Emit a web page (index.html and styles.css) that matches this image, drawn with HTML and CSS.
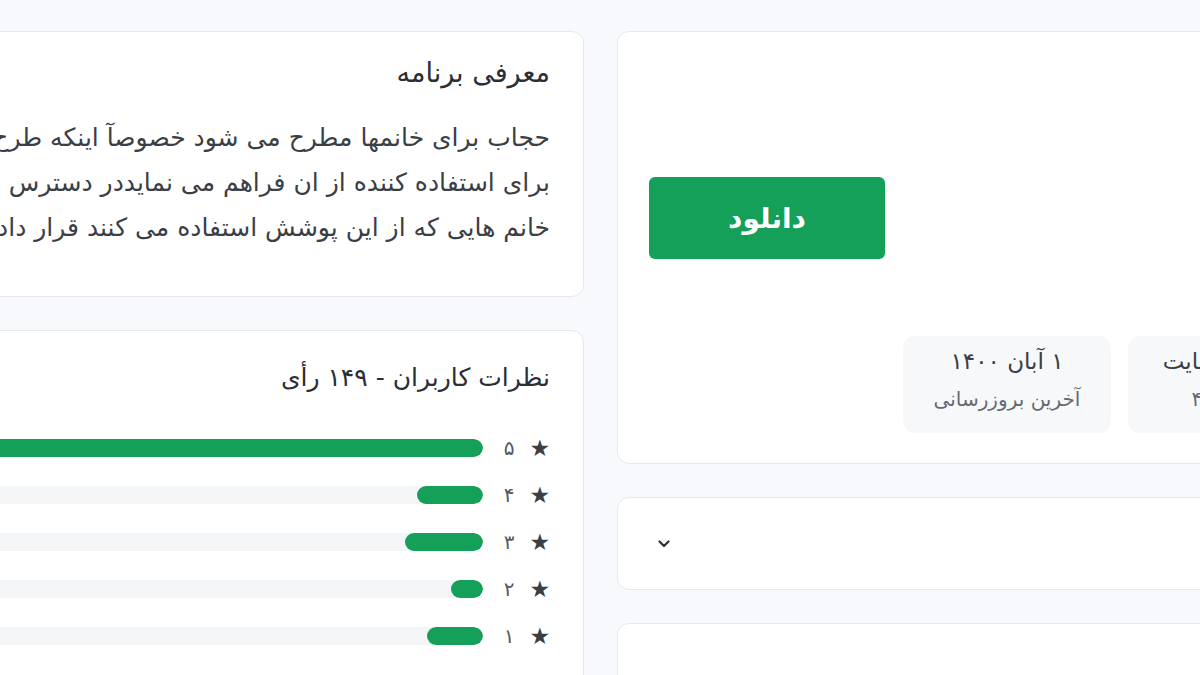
FILE: index.html
```html
<!DOCTYPE html>
<html lang="fa">
<head>
<meta charset="utf-8">
<title>دانلود برنامه</title>
<link rel="stylesheet" href="styles.css">
</head>
<body>
<div class="page">
  <div class="side">
    <section class="card app-card">
      <div class="app-head">
        <button class="btn-download">دانلود</button>
      </div>
      <div class="stats">
        <div class="stat">
          <div class="stat-value">۱۲۵.۴ مگابایت</div>
          <div class="stat-label">نسخه ۴.۰</div>
        </div>
        <div class="stat">
          <div class="stat-value">۱ آبان ۱۴۰۰</div>
          <div class="stat-label">آخرین بروزرسانی</div>
        </div>
      </div>
    </section>
    <section class="card accordion">
      <svg class="chevron" viewBox="0 0 12 8" width="12" height="8"><path d="M1.5 1.5 L6 6 L10.5 1.5" fill="none" stroke="#2b2f36" stroke-width="2.2" stroke-linecap="round" stroke-linejoin="round"/></svg>
    </section>
    <section class="card empty-card"></section>
  </div>
  <div class="main">
    <section class="card intro">
      <h2 class="card-title">معرفی برنامه</h2>
      <p class="intro-text">حجاب برای خانمها مطرح می شود خصوصآ اینکه طرح های زیبا و متنوعی را<br>برای استفاده کننده از ان فراهم می نمایددر دسترس بودن این برنامه برای<br>خانم هایی که از این پوشش استفاده می کنند قرار داده شده است.</p>
    </section>
    <section class="card reviews">
      <h2 class="card-title reviews-title">نظرات کاربران - ۱۴۹ رأی</h2>
      <div class="rating-list">
        <div class="rating-row">
          <span class="star">★</span><span class="num">۵</span>
          <div class="track"><div class="fill" style="width:100%"></div></div>
        </div>
        <div class="rating-row">
          <span class="star">★</span><span class="num">۴</span>
          <div class="track"><div class="fill" style="width:9.4%"></div></div>
        </div>
        <div class="rating-row">
          <span class="star">★</span><span class="num">۳</span>
          <div class="track"><div class="fill" style="width:11.1%"></div></div>
        </div>
        <div class="rating-row">
          <span class="star">★</span><span class="num">۲</span>
          <div class="track"><div class="fill" style="width:4.6%"></div></div>
        </div>
        <div class="rating-row">
          <span class="star">★</span><span class="num">۱</span>
          <div class="track"><div class="fill" style="width:8%"></div></div>
        </div>
      </div>
    </section>
  </div>
</div>
</body>
</html>
```
FILE: styles.css
```css
html, body {
  margin: 0;
  padding: 0;
}
body {
  background: #f8f9fc;
  overflow: hidden;
  font-family: "DejaVu Sans", "Noto Sans", sans-serif;
  color: #2d3139;
}
.page {
  direction: rtl;
  display: flex;
  align-items: flex-start;
  gap: 33px;
  width: 1618px;
  margin-left: -250px;
  padding-top: 31px;
}
.side {
  width: 751px;
  flex: none;
  display: flex;
  flex-direction: column;
  gap: 33px;
}
.main {
  flex: 1;
  min-width: 0;
  display: flex;
  flex-direction: column;
  gap: 33px;
}
.card {
  background: #fff;
  border: 1px solid #e6e8ec;
  border-radius: 12px;
  box-sizing: border-box;
}
/* app card */
.app-card {
  padding: 31px 31px 30px;
}
.app-head {
  height: 196px;
  display: flex;
  align-items: flex-end;
  justify-content: flex-end;
}
.btn-download {
  width: 236px;
  height: 82px;
  border: none;
  border-radius: 6px;
  background: #15a05a;
  color: #fff;
  font-family: inherit;
  font-size: 28px;
  font-weight: bold;
  padding: 0;
}
.stats {
  margin-top: 77px;
  display: flex;
  gap: 17px;
}
.stat {
  width: 208px;
  height: 97px;
  box-sizing: border-box;
  background: #f7f8fa;
  border-radius: 12px;
  padding-top: 11px;
  text-align: center;
  white-space: nowrap;
}
.stat-value {
  font-size: 23px;
  line-height: 28px;
  color: #3a3e46;
}
.stat-label {
  margin-top: 10px;
  font-size: 20px;
  line-height: 28px;
  color: #656a73;
}
/* accordion */
.accordion {
  height: 93px;
  display: flex;
  align-items: center;
  justify-content: flex-end;
  padding: 0 40px;
}
.chevron {
  display: block;
}
.empty-card {
  height: 220px;
}
/* intro */
.card-title {
  margin: 0;
  font-size: 27px;
  font-weight: normal;
  line-height: 32px;
  color: #2a2e35;
}
.reviews-title {
  font-size: 25px;
}
.intro {
  padding: 25px 33px 46px;
}
.intro-text {
  margin: 26px 0 0;
  font-size: 25px;
  line-height: 45px;
  white-space: nowrap;
  color: #3a3e46;
}
/* reviews */
.reviews {
  padding: 31px 33px 60px;
}
.rating-list {
  margin-top: 30px;
  display: flex;
  flex-direction: column;
}
.rating-row {
  height: 47px;
  display: flex;
  align-items: center;
}
.star {
  width: 20px;
  font-size: 23px;
  color: #3a3e46;
  text-align: center;
}
.num {
  width: 14px;
  margin: 0 14px 0 19px;
  font-size: 20px;
  color: #555a63;
  text-align: center;
}
.track {
  flex: 1;
  height: 18px;
  border-radius: 9px;
  background: #f4f5f7;
  overflow: hidden;
}
.fill {
  height: 100%;
  border-radius: 9px;
  background: #15a05a;
}
```
